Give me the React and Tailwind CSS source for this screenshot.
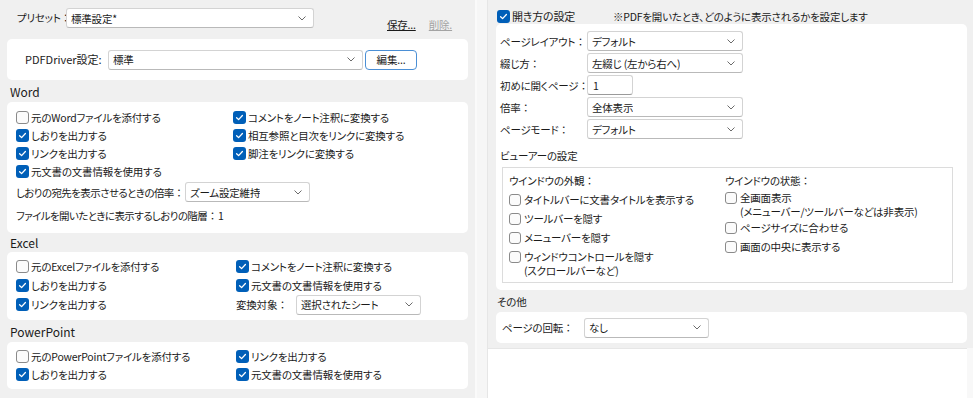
import React from 'react';

const Chevron = () => (
    <svg width="8" height="5" viewBox="0 0 8 5" className="shrink-0">
        <path d="M0.5 0.5 L4 4 L7.5 0.5" fill="none" stroke="#6b6b6b" strokeWidth="1" />
    </svg>
);

// 全角コロンは詰めない
const Colon = () => <span className="[font-feature-settings:normal]">：</span>;

const Select = ({ value, w }) => (
    <div className={`flex h-[20px] shrink-0 items-center justify-between rounded-[3px] border border-[#d3d3d3] border-b-[#b9b9b9] bg-white pl-[4px] pr-[7px] ${w}`}>
        <span className="truncate">{value}</span>
        <Chevron />
    </div>
);

const Check = ({ checked, small }) => {
    const size = small ? 'h-[12px] w-[12px]' : 'h-[13px] w-[13px]';
    if (checked) {
        return (
            <span className={`flex ${size} shrink-0 items-center justify-center rounded-[3px] bg-[#005fb8]`}>
                <svg width="9" height="9" viewBox="0 0 9 9">
                    <path d="M1.6 4.7 L3.6 6.6 L7.4 2.5" fill="none" stroke="white" strokeWidth="1.3" strokeLinecap="round" strokeLinejoin="round" />
                </svg>
            </span>
        );
    }
    return <span className={`block ${size} shrink-0 rounded-[3px] border border-[#8a8a8a] bg-[#fbfbfb]`} />;
};

const CheckItem = ({ checked, children, h = 'h-[18px]' }) => (
    <div className={`flex ${h} items-center gap-[2px]`}>
        <Check checked={checked} />
        <span className="whitespace-nowrap">{children}</span>
    </div>
);

// ビューアーの設定の中の項目 (折り返しあり)
const ViewItem = ({ children, sub, extra = '' }) => (
    <div className={`flex items-start gap-[3px] pt-[3px] pb-[3px] ${extra}`}>
        <div className="mt-[1px] shrink-0">
            <Check small />
        </div>
        <div className="whitespace-nowrap">
            <div className="leading-[13px]">{children}</div>
            {sub && <div className="mt-[1px] leading-[13px]">{sub}</div>}
        </div>
    </div>
);

const SectionLabel = ({ children, h }) => (
    <div className={`flex ${h} shrink-0 items-center pl-[3px] text-[12px] tracking-normal`}>{children}</div>
);

const Row = ({ label, children }) => (
    <div className="flex h-[22px] items-center">
        <span className="w-[87px] shrink-0 whitespace-nowrap">
            {label}
            <Colon />
        </span>
        {children}
    </div>
);

export default function App() {
    return (
        <div className="flex h-[398px] w-[973px] overflow-hidden bg-[#f8f8f8] text-[10.5px] leading-[15px] tracking-[-0.2px] text-[#1b1b1b] font-['Noto_Sans_CJK_JP',sans-serif] [font-feature-settings:'palt']">
            {/* 左側: 変換設定 */}
            <div className="flex h-full w-[475px] shrink-0 flex-col bg-[#f0f0f0] px-[7px]">
                <div className="flex h-[39px] shrink-0 items-start pl-[10px] pt-[8px]">
                    <span className="mt-[2px] w-[49px] shrink-0 whitespace-nowrap">
                        プリセット
                        <Colon />
                    </span>
                    <Select w="w-[248px]" value="標準設定*" />
                    <span className="ml-[73px] mt-[9px] underline">保存...</span>
                    <span className="ml-[13px] mt-[9px] text-[#a3a3a3] underline">削除.</span>
                </div>

                <div className="flex h-[41px] shrink-0 items-center rounded-[5px] bg-white pl-[18px]">
                    <span className="w-[83px] shrink-0 whitespace-nowrap text-[11px] tracking-normal">PDFDriver設定:</span>
                    <Select w="w-[255px]" value="標準" />
                    <button className="ml-[2px] h-[20px] w-[52px] rounded-[4px] border border-[#4b8fd5] bg-white">
                        編集...
                    </button>
                </div>

                <SectionLabel h="h-[22px]">Word</SectionLabel>
                <div className="h-[131px] shrink-0 rounded-[5px] bg-white pl-[9px] pt-[6px]">
                    <div className="grid grid-cols-[217px_1fr]">
                        <CheckItem>元のWordファイルを添付する</CheckItem>
                        <CheckItem checked>コメントをノート注釈に変換する</CheckItem>
                        <CheckItem checked>しおりを出力する</CheckItem>
                        <CheckItem checked>相互参照と目次をリンクに変換する</CheckItem>
                        <CheckItem checked>リンクを出力する</CheckItem>
                        <CheckItem checked>脚注をリンクに変換する</CheckItem>
                        <CheckItem checked>元文書の文書情報を使用する</CheckItem>
                        <div />
                    </div>
                    <div className="mt-[2px] flex h-[20px] items-center">
                        <span className="w-[169px] shrink-0 whitespace-nowrap tracking-[-0.6px]">
                            しおりの宛先を表示させるときの倍率
                            <Colon />
                        </span>
                        <Select w="w-[125px]" value="ズーム設定維持" />
                    </div>
                    <div className="mt-[4px] flex h-[18px] items-center">
                        <span className="w-[202px] shrink-0 whitespace-nowrap tracking-[-0.6px]">
                            ファイルを開いたときに表示するしおりの階層
                            <Colon />
                        </span>
                        <span>1</span>
                    </div>
                </div>

                <SectionLabel h="h-[19px]">Excel</SectionLabel>
                <div className="h-[68px] shrink-0 rounded-[5px] bg-white pl-[9px] pt-[5px]">
                    <div className="grid grid-cols-[220px_1fr]">
                        <CheckItem h="h-[19px]">元のExcelファイルを添付する</CheckItem>
                        <CheckItem h="h-[19px]" checked>コメントをノート注釈に変換する</CheckItem>
                        <CheckItem h="h-[19px]" checked>しおりを出力する</CheckItem>
                        <CheckItem h="h-[19px]" checked>元文書の文書情報を使用する</CheckItem>
                        <CheckItem h="h-[19px]" checked>リンクを出力する</CheckItem>
                        <div className="flex h-[19px] items-center">
                            <span className="w-[60px] shrink-0 whitespace-nowrap">
                                変換対象
                                <Colon />
                            </span>
                            <Select w="w-[125px]" value="選択されたシート" />
                        </div>
                    </div>
                </div>

                <SectionLabel h="h-[22px]">PowerPoint</SectionLabel>
                <div className="h-[47px] shrink-0 rounded-[5px] bg-white pl-[9px] pt-[5px]">
                    <div className="grid grid-cols-[220px_1fr]">
                        <CheckItem>元のPowerPointファイルを添付する</CheckItem>
                        <CheckItem checked>リンクを出力する</CheckItem>
                        <CheckItem checked>しおりを出力する</CheckItem>
                        <CheckItem checked>元文書の文書情報を使用する</CheckItem>
                    </div>
                </div>
            </div>

            {/* 区切り */}
            <div className="h-full w-[12px] shrink-0 border-l-2 border-[#fafafa] bg-[#f6f6f6]" />

            {/* 右側: 開き方の設定 */}
            <div className="flex h-full w-[486px] shrink-0 flex-col">
                <div className="flex h-[348px] shrink-0 flex-col border-l border-[#e6e6e6] bg-[#f0f0f0] pl-[8px] pr-[6px]">
                    <div className="flex h-[24px] shrink-0 items-center pl-[1px] pt-[8px]">
                        <Check checked />
                        <span className="ml-[2px] w-[101px] shrink-0 whitespace-nowrap text-[11px]">開き方の設定</span>
                        <span className="whitespace-nowrap">※PDFを開いたとき、どのように表示されるかを設定します</span>
                    </div>

                    <div className="h-[266px] shrink-0 rounded-[5px] bg-white pl-[4px] pt-[6px]">
                        <Row label="ページレイアウト">
                            <Select w="w-[156px]" value="デフォルト" />
                        </Row>
                        <Row label="綴じ方">
                            <Select w="w-[156px]" value="左綴じ (左から右へ)" />
                        </Row>
                        <Row label="初めに開くページ">
                            <div className="flex h-[20px] w-[46px] items-center rounded-[3px] border border-[#d3d3d3] border-b-[#9a9a9a] bg-white pl-[5px]">
                                1
                            </div>
                        </Row>
                        <Row label="倍率">
                            <Select w="w-[156px]" value="全体表示" />
                        </Row>
                        <Row label="ページモード">
                            <Select w="w-[156px]" value="デフォルト" />
                        </Row>

                        <div className="h-[27px] pt-[8px] whitespace-nowrap">ビューアーの設定</div>

                        <div className="ml-[2px] h-[116px] w-[451px] border border-[#dcdcdc] bg-white pl-[6px] pt-[6px]">
                            <div className="grid grid-cols-[216px_1fr]">
                                <div className="flex flex-col">
                                    <div className="leading-[14px] whitespace-nowrap">
                                        ウインドウの外観
                                        <Colon />
                                    </div>
                                    <div className="mt-[2px] flex flex-col">
                                        <ViewItem>タイトルバーに文書タイトルを表示する</ViewItem>
                                        <ViewItem>ツールバーを隠す</ViewItem>
                                        <ViewItem>メニューバーを隠す</ViewItem>
                                        <ViewItem sub="(スクロールバーなど)">ウィンドウコントロールを隠す</ViewItem>
                                    </div>
                                </div>
                                <div className="flex flex-col">
                                    <div className="leading-[14px] whitespace-nowrap">
                                        ウインドウの状態
                                        <Colon />
                                    </div>
                                    <div className="flex flex-col">
                                        <ViewItem sub="(メニューバー/ツールバーなどは非表示)" extra="!pb-0">
                                            全画面表示
                                        </ViewItem>
                                        <ViewItem>ページサイズに合わせる</ViewItem>
                                        <ViewItem>画面の中央に表示する</ViewItem>
                                    </div>
                                </div>
                            </div>
                        </div>
                    </div>

                    <div className="flex h-[22px] shrink-0 items-center pl-[1px]">その他</div>
                    <div className="flex h-[31px] shrink-0 items-center rounded-[5px] bg-white pl-[6px]">
                        <span className="w-[82px] shrink-0 whitespace-nowrap">
                            ページの回転
                            <Colon />
                        </span>
                        <Select w="w-[125px]" value="なし" />
                    </div>
                </div>
                <div className="mr-[6px] flex-1 border-l border-t border-[#e6e6e6] bg-white" />
            </div>
        </div>
    );
}
